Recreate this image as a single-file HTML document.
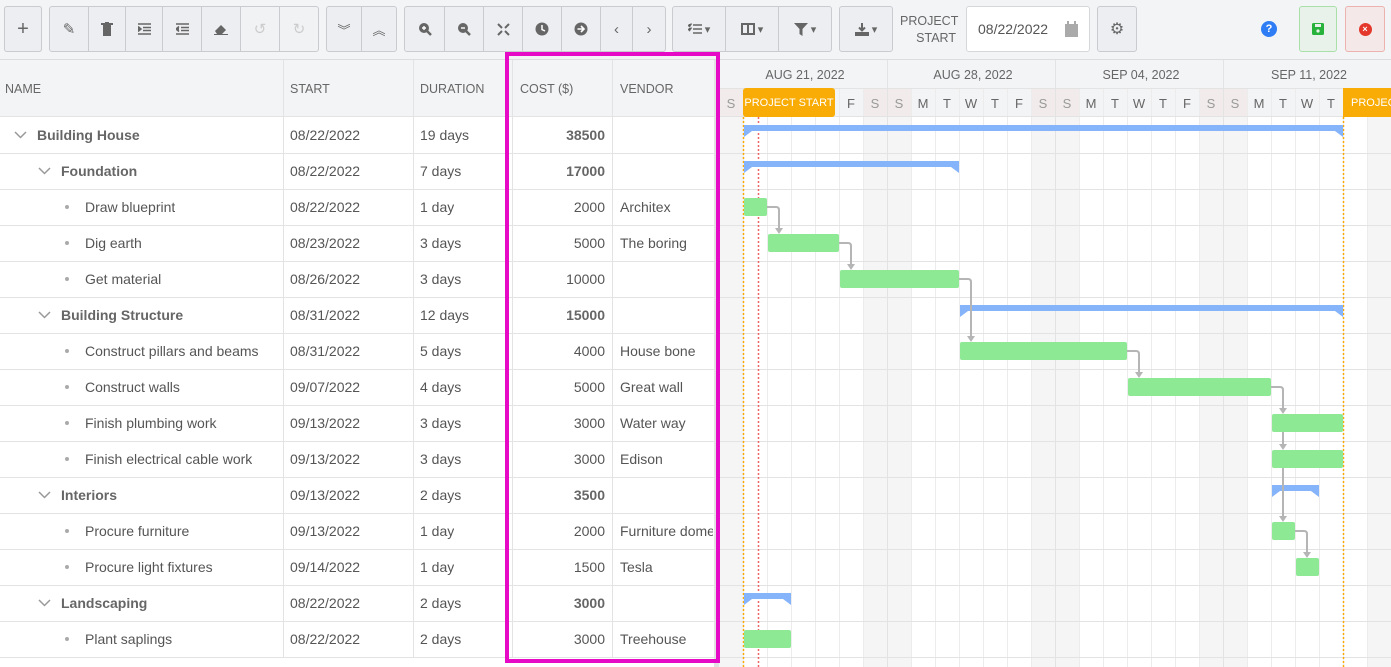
<!DOCTYPE html>
<html><head><meta charset="utf-8"><style>
*{box-sizing:border-box;margin:0;padding:0}
body{width:1391px;height:667px;overflow:hidden;background:#f3f4f6;font-family:"Liberation Sans",sans-serif;color:#555;position:relative}
.b{position:absolute;top:6px;height:46px;background:#eceef1;border:1px solid #c9cbce;display:flex;align-items:center;justify-content:center;color:#666;font-size:15px}
.g{position:absolute;top:6px;height:46px;border:1px solid #c9cbce;border-radius:3px}
.hd{position:absolute;top:60px;height:57px;font-size:12.5px;color:#666;display:flex;align-items:center}
.c{position:absolute;font-size:14px;color:#555;white-space:nowrap;overflow:hidden}
.bold{font-weight:bold;color:#666}
</style></head><body>
<!-- toolbar -->
<div class="g" style="left:4px;width:38px"></div>
<div class="b" style="left:4px;width:38px;border-radius:3px;font-size:20px">+</div>
<div class="b" style="left:49px;width:40px;border-radius:3px 0 0 3px">✎</div>
<div class="b" style="left:88px;width:38px"><svg width="12" height="14"><rect x="2" y="3" width="8" height="11" fill="#666"/><rect x="0" y="1" width="12" height="2" fill="#666"/><rect x="4" y="0" width="4" height="2" fill="#666"/></svg></div>
<div class="b" style="left:125px;width:38px"><svg width="13" height="12" stroke="#666" stroke-width="1.5"><path d="M0 1H13M5 4.5H13M5 7.5H13M0 11H13"/><path d="M0 3.5L3 6L0 8.5" fill="#666"/></svg></div>
<div class="b" style="left:162px;width:40px"><svg width="13" height="12" stroke="#666" stroke-width="1.5"><path d="M0 1H13M5 4.5H13M5 7.5H13M0 11H13"/><path d="M3 3.5L0 6L3 8.5" fill="#666"/></svg></div>
<div class="b" style="left:201px;width:40px"><svg width="14" height="12"><path d="M1 8L7 2L12 7L8 11H3Z" fill="#666"/><path d="M0 11.5H14" stroke="#666"/></svg></div>
<div class="b" style="left:240px;width:40px;background:#f1f2f4;color:#ccc">↺</div>
<div class="b" style="left:279px;width:40px;background:#f1f2f4;color:#ccc;border-radius:0 3px 3px 0">↻</div>
<div class="b" style="left:326px;width:36px;border-radius:3px 0 0 3px;font-size:13px">︾</div>
<div class="b" style="left:361px;width:36px;border-radius:0 3px 3px 0;font-size:13px">︽</div>
<div class="b" style="left:404px;width:41px;border-radius:3px 0 0 3px"><svg width="14" height="14"><circle cx="6" cy="6" r="5" fill="#666"/><path d="M9 9L13 13" stroke="#666" stroke-width="2.5"/><path d="M4 6H8M6 4V8" stroke="#fff" stroke-width="1.4"/></svg></div>
<div class="b" style="left:444px;width:40px"><svg width="14" height="14"><circle cx="6" cy="6" r="5" fill="#666"/><path d="M9 9L13 13" stroke="#666" stroke-width="2.5"/><path d="M4 6H8" stroke="#fff" stroke-width="1.4"/></svg></div>
<div class="b" style="left:483px;width:40px"><svg width="13" height="13" stroke="#666" stroke-width="2"><path d="M1 1L5 5M12 1L8 5M1 12L5 8M12 12L8 8"/></svg></div>
<div class="b" style="left:522px;width:40px"><svg width="14" height="14"><circle cx="7" cy="7" r="6.5" fill="#666"/><path d="M7 3V7.5L10 9" stroke="#fff" stroke-width="1.5" fill="none"/></svg></div>
<div class="b" style="left:561px;width:40px"><svg width="14" height="14"><circle cx="7" cy="7" r="6.5" fill="#666"/><path d="M3.5 7H10M7 4L10 7L7 10" stroke="#fff" stroke-width="1.6" fill="none"/></svg></div>
<div class="b" style="left:600px;width:33px">‹</div>
<div class="b" style="left:632px;width:34px;border-radius:0 3px 3px 0">›</div>
<div class="b" style="left:672px;width:54px;border-radius:3px 0 0 3px;font-size:11px"><svg width="14" height="12" stroke="#666" stroke-width="1.5"><path d="M5 2H14M5 6H14M5 10H14M0 2L1.5 3.5L3.5 0.5M0 6L1.5 7.5L3.5 4.5"/></svg>&nbsp;▾</div>
<div class="b" style="left:725px;width:54px;font-size:11px"><svg width="14" height="12"><rect x="1" y="1" width="12" height="10" fill="none" stroke="#666" stroke-width="2"/><path d="M7 1V11" stroke="#666" stroke-width="2"/></svg>&nbsp;▾</div>
<div class="b" style="left:778px;width:54px;border-radius:0 3px 3px 0;font-size:11px"><svg width="14" height="13"><path d="M0 0H14L8.5 6V13L5.5 11V6Z" fill="#666"/></svg>&nbsp;▾</div>
<div class="b" style="left:839px;width:54px;border-radius:3px;font-size:11px"><svg width="14" height="13"><path d="M7 0V7M4 4.5L7 7.5L10 4.5" stroke="#666" stroke-width="2" fill="none"/><rect x="0" y="9" width="14" height="4" fill="#666"/></svg>&nbsp;▾</div>
<div style="position:absolute;left:900px;top:13px;width:56px;text-align:right;font-size:12.5px;line-height:17px;color:#666">PROJECT<br>START</div>
<div style="position:absolute;left:966px;top:6px;width:124px;height:46px;background:#fff;border:1px solid #d5d7da;border-radius:3px;font-size:14px;color:#555;padding:14px 0 0 11px">08/22/2022<svg style="position:absolute;right:11px;top:14px" width="13" height="16"><rect x="0" y="3" width="13" height="13" fill="#aaa"/><rect x="2" y="0" width="2" height="4" fill="#aaa"/><rect x="9" y="0" width="2" height="4" fill="#aaa"/></svg></div>
<div class="b" style="left:1097px;width:40px;border-radius:3px;font-size:16px">⚙</div>
<div style="position:absolute;left:1261px;top:21px;width:16px;height:16px;border-radius:50%;background:#2f7df5;color:#fff;font-size:11px;font-weight:bold;text-align:center;line-height:16px">?</div>
<div class="b" style="left:1299px;width:38px;border-radius:3px;background:#e9f2ea;border-color:#a8e0a8"><svg width="12" height="12"><rect width="12" height="12" rx="1.5" fill="#27b33b"/><rect x="3" y="1" width="6" height="3" fill="#e9f2ea"/><circle cx="6" cy="8" r="1.6" fill="#e9f2ea"/></svg></div>
<div class="b" style="left:1345px;width:40px;border-radius:3px;background:#f4e8e8;border-color:#ecb3ae"><div style="width:13px;height:13px;border-radius:50%;background:#e3382b;color:#fff;font-size:9px;line-height:13px;text-align:center;font-weight:bold">×</div></div>

<!-- grid area -->
<div style="position:absolute;left:0;top:59px;width:1391px;height:1px;background:#ddd"></div>
<div style="position:absolute;left:0;top:117px;width:719px;height:550px;background:#fff"></div>
<div class="hd" style="left:5px">NAME</div>
<div class="hd" style="left:290px">START</div>
<div class="hd" style="left:420px">DURATION</div>
<div class="hd" style="left:520px">COST ($)</div>
<div class="hd" style="left:620px">VENDOR</div>
<div style="position:absolute;left:0;top:60px;width:719px;height:607px">
<svg width="719" height="607" style="position:absolute;left:0;top:0">
<g stroke="#e3e3e3"><path d="M283.5 0V597M413.5 0V597M512.5 0V597M612.5 0V597"/>
<path d="M0 56.5H716M0 93.5H716M0 129.5H716M0 165.5H716M0 201.5H716M0 237.5H716M0 273.5H716M0 309.5H716M0 345.5H716M0 381.5H716M0 417.5H716M0 453.5H716M0 489.5H716M0 525.5H716M0 561.5H716M0 597.5H716"/></g>
<rect x="714" y="0" width="5" height="607" fill="#e2e2e2"/>
</svg>
</div>
<div id="rows"></div>
<!-- chart -->
<svg width="672" height="607" style="position:absolute;left:719px;top:60px" font-family="Liberation Sans" font-size="12.5">
<rect x="0" y="0" width="672" height="57" fill="#f3f4f6"/>
<rect x="0" y="57" width="672" height="550" fill="#fff"/>
<g fill="#f5f5f5"><rect x="0" y="57" width="24" height="550"/><rect x="144" y="57" width="48" height="550"/><rect x="312" y="57" width="48" height="550"/><rect x="480" y="57" width="48" height="550"/><rect x="648" y="57" width="24" height="550"/></g>
<g fill="#f1ebeb"><rect x="0" y="29" width="24" height="28"/><rect x="144" y="29" width="48" height="28"/><rect x="312" y="29" width="48" height="28"/><rect x="480" y="29" width="48" height="28"/></g>
<g stroke="#ececec" id="vl"></g>
<g stroke="#e3e3e3"><path d="M0 28.5H672M0 56.5H672M0 93.5H672M0 129.5H672M0 165.5H672M0 201.5H672M0 237.5H672M0 273.5H672M0 309.5H672M0 345.5H672M0 381.5H672M0 417.5H672M0 453.5H672M0 489.5H672M0 525.5H672M0 561.5H672M0 597.5H672"/>
<path d="M168.5 0V607M336.5 0V607M504.5 0V607"/></g>
<g fill="#666" text-anchor="middle"><text x="86" y="19">AUG 21, 2022</text><text x="254" y="19">AUG 28, 2022</text><text x="422" y="19">SEP 04, 2022</text><text x="590" y="19">SEP 11, 2022</text></g>
<g fill="#666" text-anchor="middle" font-size="13" id="days"></g>
<rect x="24" y="28" width="92" height="29" rx="3" fill="#f8ac05"/>
<text x="70" y="46" fill="#fff" font-size="11" text-anchor="middle">PROJECT START</text>
<rect x="624" y="28" width="60" height="29" fill="#f8ac05"/>
<text x="632" y="46" fill="#fff" font-size="11">PROJECT</text>
<path d="M24.5 57V607M624.5 57V607" stroke="#f8ac05" stroke-width="1.5" stroke-dasharray="2 2"/>
<path d="M39.5 57V607" stroke="#f06565" stroke-width="1.5" stroke-dasharray="2 2"/>
<g id="bars"></g>
</svg>
<div style="position:absolute;left:505px;top:52px;width:215px;height:611px;border:4px solid #e60ac6"></div>
<script>
var R=[["Building House",0,"08/22/2022","19 days","38500","",[25,624,1]],
["Foundation",1,"08/22/2022","7 days","17000","",[25,240,1]],
["Draw blueprint",2,"08/22/2022","1 day","2000","Architex",[25,48]],
["Dig earth",2,"08/23/2022","3 days","5000","The boring",[49,120]],
["Get material",2,"08/26/2022","3 days","10000","",[121,240]],
["Building Structure",1,"08/31/2022","12 days","15000","",[241,624,1]],
["Construct pillars and beams",2,"08/31/2022","5 days","4000","House bone",[241,408]],
["Construct walls",2,"09/07/2022","4 days","5000","Great wall",[409,552]],
["Finish plumbing work",2,"09/13/2022","3 days","3000","Water way",[553,624]],
["Finish electrical cable work",2,"09/13/2022","3 days","3000","Edison",[553,624]],
["Interiors",1,"09/13/2022","2 days","3500","",[553,600,1]],
["Procure furniture",2,"09/13/2022","1 day","2000","Furniture dome",[553,576]],
["Procure light fixtures",2,"09/14/2022","1 day","1500","Tesla",[577,600]],
["Landscaping",1,"08/22/2022","2 days","3000","",[25,72,1]],
["Plant saplings",2,"08/22/2022","2 days","3000","Treehouse",[25,72]]];
var h="",b="";
R.forEach(function(r,i){var t=117+36*i,ty=t+10,bd=r[1]<2?" bold":"";
var nx=[37,61,85][r[1]];
if(r[1]<2)h+='<svg class="c" style="left:'+(nx-23)+'px;top:'+(t+14)+'px" width="13" height="8"><path d="M1 1L6.5 6.5L12 1" stroke="#999" stroke-width="1.5" fill="none"/></svg>';
else h+='<div style="position:absolute;left:65px;top:'+(t+16)+'px;width:4px;height:4px;border-radius:50%;background:#aaa"></div>';
h+='<div class="c'+bd+'" style="left:'+nx+'px;top:'+ty+'px">'+r[0]+'</div>';
h+='<div class="c" style="left:290px;top:'+ty+'px">'+r[2]+'</div>';
h+='<div class="c" style="left:420px;top:'+ty+'px">'+r[3]+'</div>';
h+='<div class="c'+bd+'" style="left:513px;width:92px;text-align:right;top:'+ty+'px">'+r[4]+'</div>';
h+='<div class="c" style="left:620px;width:93px;top:'+ty+'px">'+r[5]+'</div>';
var g=r[6],y=57+36*i;
if(g[2])b+='<path d="M'+g[0]+' '+(y+8)+'H'+g[1]+'V'+(y+20)+'L'+(g[1]-8)+' '+(y+14)+'H'+(g[0]+8)+'L'+g[0]+' '+(y+20)+'Z" fill="#86b4fa"/>';
else b+='<rect x="'+g[0]+'" y="'+(y+9)+'" width="'+(g[1]-g[0])+'" height="18" rx="2" fill="#8de993"/>';
});
document.getElementById("rows").innerHTML=h;
var L=[[48,2,3],[120,3,4],[240,4,6],[408,6,7],[552,7,8],[576,11,12]];
var s="";
L.forEach(function(l){var y1=57+36*l[1]+18,y2=57+36*l[2]+9,x=l[0]+12;
s+='<path d="M'+l[0]+' '+y1+'H'+(x-3)+'Q'+x+' '+y1+' '+x+' '+(y1+3)+'V'+(y2-5)+'" stroke="#b5b5b5" stroke-width="2" fill="none"/><path d="M'+(x-4)+' '+(y2-6)+'H'+(x+4)+'L'+x+' '+y2+'Z" fill="#b5b5b5"/>';});
[[9],[11]].forEach(function(k){});
s+='<path d="M564 '+(57+36*8+27)+'V'+(57+36*9+3)+'M564 '+(57+36*9+27)+'V'+(57+36*11+3)+'" stroke="#b5b5b5" stroke-width="2"/><path d="M560 '+(57+36*9+3)+'H568L564 '+(57+36*9+9)+'Z M560 '+(57+36*11+3)+'H568L564 '+(57+36*11+9)+'Z" fill="#b5b5b5"/>';
document.getElementById("bars").innerHTML=b+s;
var v="";for(var x=24;x<672;x+=24)v+='<path d="M'+(x+.5)+' 29V607"/>';document.getElementById("vl").innerHTML=v;
var D="SMTWTFS",d="";for(var i=0;i<28;i++){if(i>=1&&i<=4)continue;if(i>=26)continue;d+='<text x="'+(i*24+12)+'" y="48"'+(i%7==0||i%7==6?' fill="#999"':'')+'>'+D[i%7]+'</text>';}
document.getElementById("days").innerHTML=d;
</script>
</body></html>
